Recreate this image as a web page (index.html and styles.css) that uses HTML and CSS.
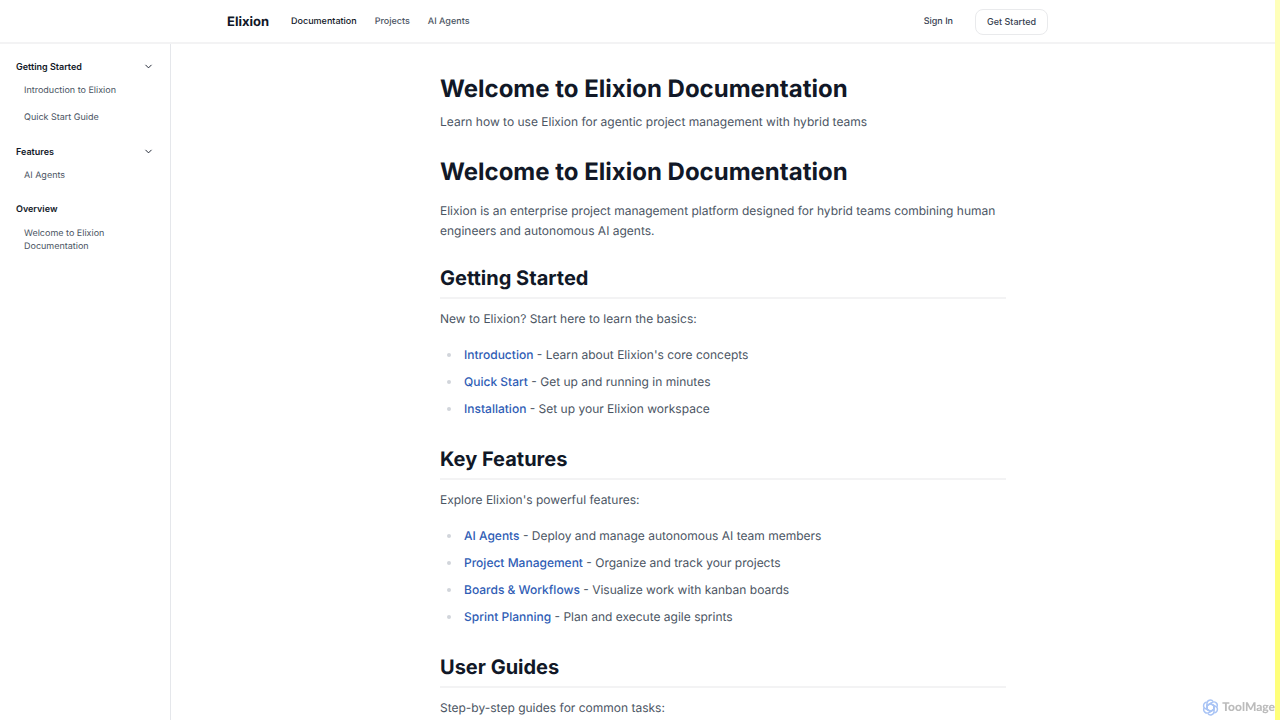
FILE: index.html
```
<!DOCTYPE html>
<html lang="en">
<head>
    <meta charset="UTF-8">
    <meta name="viewport" content="width=device-width, initial-scale=1.0">
    <title>Welcome to Elixion Documentation</title>
    <link rel="stylesheet" href="styles.css">
</head>
<body>
<header class="header">
    <div class="header-inner">
        <a class="logo" href="#">Elixion</a>
        <nav class="main-nav">
            <a class="active" href="#">Documentation</a>
            <a href="#">Projects</a>
            <a href="#">AI Agents</a>
        </nav>
        <div class="header-actions">
            <a class="sign-in" href="#">Sign In</a>
            <button class="btn" type="button">Get Started</button>
        </div>
    </div>
</header>

<div class="layout">
    <aside class="sidebar">
        <section class="group">
            <button class="group-title" type="button">
                Getting Started
                <svg class="chevron" viewBox="0 0 24 24"><path d="m6 9 6 6 6-6"/></svg>
            </button>
            <a href="#">Introduction to Elixion</a>
            <a href="#">Quick Start Guide</a>
        </section>
        <section class="group">
            <button class="group-title" type="button">
                Features
                <svg class="chevron" viewBox="0 0 24 24"><path d="m6 9 6 6 6-6"/></svg>
            </button>
            <a href="#">AI Agents</a>
        </section>
        <section class="group">
            <div class="group-title">Overview</div>
            <a href="#">Welcome to Elixion Documentation</a>
        </section>
    </aside>

    <main class="content">
        <article class="article">
            <h1>Welcome to Elixion Documentation</h1>
            <p class="lead">Learn how to use Elixion for agentic project management with hybrid teams</p>

            <h1>Welcome to Elixion Documentation</h1>
            <p class="intro">Elixion is an enterprise project management platform designed for hybrid teams combining human engineers and autonomous AI agents.</p>

            <h2>Getting Started</h2>
            <p>New to Elixion? Start here to learn the basics:</p>
            <ul>
                <li><a href="#">Introduction</a> - Learn about Elixion's core concepts</li>
                <li><a href="#">Quick Start</a> - Get up and running in minutes</li>
                <li><a href="#">Installation</a> - Set up your Elixion workspace</li>
            </ul>

            <h2>Key Features</h2>
            <p>Explore Elixion's powerful features:</p>
            <ul>
                <li><a href="#">AI Agents</a> - Deploy and manage autonomous AI team members</li>
                <li><a href="#">Project Management</a> - Organize and track your projects</li>
                <li><a href="#">Boards &amp; Workflows</a> - Visualize work with kanban boards</li>
                <li><a href="#">Sprint Planning</a> - Plan and execute agile sprints</li>
            </ul>

            <h2>User Guides</h2>
            <p>Step-by-step guides for common tasks:</p>
        </article>
    </main>
</div>

<div class="scroll-track"><div class="scroll-thumb"></div></div>

<div class="watermark">
    <svg viewBox="0 0 24 24">
        <g id="petal">
            <path d="M7 14.500V6.500a4.800 4.800 0 0 1 8.800-2.800"/>
            <path d="M7 9.500l5-3 6 3.500"/>
        </g>
        <use href="#petal" transform="rotate(60 12 12)"/>
        <use href="#petal" transform="rotate(120 12 12)"/>
        <use href="#petal" transform="rotate(180 12 12)"/>
        <use href="#petal" transform="rotate(240 12 12)"/>
        <use href="#petal" transform="rotate(300 12 12)"/>
    </svg>
    <span>ToolMage</span>
</div>
</body>
</html>
```
FILE: styles.css
```
* {
    box-sizing: border-box;
}

body {
    display: flex;
    flex-direction: column;
    min-height: 100vh;
    margin: 0;
    padding-right: 5px;
    font-family: Inter, sans-serif;
    font-size: 12px;
    line-height: 20px;
    text-rendering: geometricPrecision;
    color: #4b5563;
    background: #fff;
}

a {
    color: inherit;
    text-decoration: none;
}

button {
    font-family: inherit;
    cursor: pointer;
}

/* Header */
.header {
    border-bottom: 2px solid #f3f3f4;
}

.header-inner {
    display: flex;
    align-items: center;
    max-width: 853px;
    height: 42px;
    margin: 0 auto;
    padding: 1px 16px 0;
}

.logo {
    margin-right: 22px;
    font-size: 13px;
    font-weight: 700;
    color: #111827;
}

.main-nav {
    display: flex;
    gap: 18px;
    font-size: 9px;
    font-weight: 500;
}

.main-nav .active {
    color: #111827;
}

.header-actions {
    display: flex;
    align-items: center;
    gap: 22px;
    margin-left: auto;
    font-size: 9px;
    font-weight: 500;
    color: #374151;
}

.btn {
    height: 26px;
    padding: 0 11px;
    border: 1px solid #e9eaec;
    border-radius: 8px;
    font-size: 9px;
    font-weight: 500;
    color: #374151;
    background: #fff;
}

/* Sidebar */
.layout {
    display: flex;
    flex: 1;
}

.sidebar {
    flex: 0 0 171px;
    padding: 12px 16px;
    border-right: 1px solid #e5e7eb;
    font-size: 9px;
    line-height: 13px;
}

.group {
    margin-bottom: 11px;
}

.group-title {
    display: flex;
    align-items: center;
    justify-content: space-between;
    width: 100%;
    height: 20px;
    margin: 0;
    padding: 0;
    border: 0;
    font-size: 9px;
    font-weight: 600;
    color: #111827;
    background: none;
}

.chevron {
    width: 11px;
    height: 11px;
    fill: none;
    stroke: #111827;
    stroke-width: 2;
    stroke-linecap: round;
    stroke-linejoin: round;
}

.group a {
    display: block;
    padding: 8px 8px 6px;
}

/* Article */
.content {
    flex: 1;
    min-width: 0;
    padding: 31px 16px 0;
}

.article {
    max-width: 566px;
    margin: 0 auto;
}

h1 {
    margin: 0;
    font-size: 24px;
    font-weight: 700;
    line-height: 28px;
    color: #111827;
}

h2 {
    margin: 24px 0 10px;
    padding-bottom: 6px;
    border-bottom: 2px solid #f3f3f4;
    font-size: 20px;
    font-weight: 700;
    line-height: 26px;
    color: #111827;
}

p {
    margin: 0;
}

.lead {
    margin: 9px 0 26px;
}

.intro {
    margin-top: 15px;
}

ul {
    margin: 12px 0 0;
    padding-left: 24px;
    list-style: none;
}

li {
    display: flex;
    align-items: center;
    padding: 3px 0;
    line-height: 21px;
    white-space: pre-wrap;
}

li::before {
    content: "";
    width: 4px;
    height: 4px;
    margin: 0 13px 0 -17px;
    border-radius: 50%;
    background: #d1d5db;
}

li a {
    font-weight: 500;
    color: #2f5db5;
}

/* Overlays */
.scroll-track {
    position: fixed;
    top: 0;
    right: 0;
    bottom: 0;
    display: flex;
    align-items: flex-end;
    width: 5px;
    background: #ffffba;
}

.scroll-thumb {
    width: 100%;
    height: 25%;
    background: #ffff7a;
}

.watermark {
    position: fixed;
    right: 5px;
    bottom: 3px;
    display: flex;
    align-items: center;
    gap: 3px;
    font-family: Lato, sans-serif;
    font-size: 12px;
    font-weight: 900;
    line-height: 20px;
    color: #bcbcbc;
}

.watermark svg {
    width: 17px;
    height: 17px;
    fill: none;
    stroke: #a9c4f5;
    stroke-width: 2;
}
```
